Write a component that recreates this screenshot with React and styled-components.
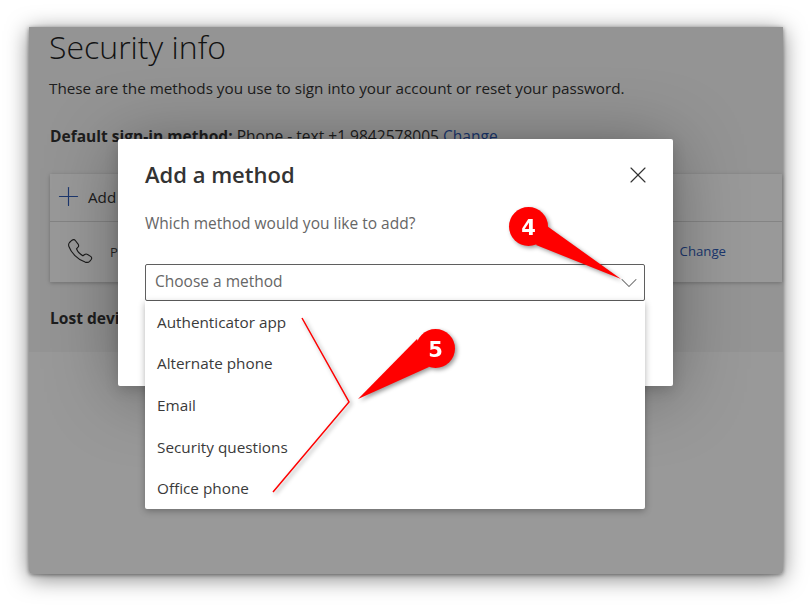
import React from "react";
import styled, { createGlobalStyle } from "styled-components";
import { X, Plus, ChevronDown } from "lucide-react";

const Global = createGlobalStyle`
  html, body { margin: 0; padding: 0; background: #fff; }
  body { font-family: "Open Sans", "Noto Sans", "Liberation Sans", sans-serif; }
  * { box-sizing: border-box; }
`;

const Stage = styled.div`
  position: relative;
  width: 812px;
  height: 606px;
  padding: 27px 29px 32px 29px;
  overflow: hidden;
  background: #fff;
`;

const Frame = styled.div`
  position: relative;
  width: 754px;
  height: 547px;
  background: #fff;
  border-radius: 0 0 4px 4px;
  box-shadow: 0 4px 22px rgba(0, 0, 0, 0.5), 0 1px 4px rgba(0, 0, 0, 0.45);
`;

const Page = styled.section`
  height: 325px;
  padding: 0 1px 0 20px;
  background: #f7f7f7;
`;

const Heading = styled.h1`
  margin: 0;
  height: 43px;
  font-size: 32px;
  line-height: 40px;
  font-weight: 300;
  white-space: nowrap;
  color: #1f1f1f;
`;

const Lead = styled.p`
  margin: 8px 0 0;
  font-size: 15.25px;
  line-height: 20px;
  color: #333;
  white-space: nowrap;
`;

const DefaultLine = styled.p`
  margin: 28px 0 0 1px;
  font-size: 15.55px;
  line-height: 20px;
  color: #333;
  white-space: nowrap;
  strong { font-weight: 700; }
`;

const Link = styled.a`
  color: #2f5cb8;
`;

const Card = styled.div`
  margin: 28px 0 0 1px;
  background: #fff;
  box-shadow: 0 1px 4px rgba(0, 0, 0, 0.25);
`;

const AddRow = styled.div`
  height: 48px;
  display: flex;
  align-items: center;
  padding: 0 0 2px 3px;
  font-size: 15.2px;
  color: #333;
  border-bottom: 1px solid #dcdcdc;
`;

const AddIcon = styled.span`
  display: flex;
  margin-right: 4px;
  color: #2f5cb8;
`;

const MethodRow = styled.div`
  height: 60px;
  display: flex;
  align-items: center;
  padding-left: 18px;
  font-size: 13px;
  color: #444;
  svg { margin-bottom: 1px; }
`;

const RowLabel = styled.span`
  margin-left: 17px;
`;

const RowLink = styled.a`
  margin-left: auto;
  margin-right: 56px;
  margin-bottom: 2px;
  font-size: 13.2px;
  color: #2f5cb8;
`;

const LostDevice = styled.p`
  margin: 26px 0 0 1px;
  font-size: 15.55px;
  line-height: 20px;
  font-weight: 700;
  color: #333;
`;

const Overlay = styled.div`
  position: absolute;
  inset: 0;
  background: rgba(0, 0, 0, 0.4);
  border-radius: 0 0 4px 4px;
`;

const Dialog = styled.div`
  position: absolute;
  left: 89px;
  top: 112px;
  width: 555px;
  height: 247px;
  padding: 19px 28px 0 27px;
  background: #fff;
  border-radius: 2px;
  box-shadow: 0 6px 70px rgba(0, 0, 0, 0.34), 0 4px 14px rgba(0, 0, 0, 0.16);
`;

const DialogHeader = styled.div`
  display: flex;
  align-items: center;
  justify-content: space-between;
  height: 34px;
`;

const DialogTitle = styled.h2`
  margin: 0 0 2px;
  font-size: 22px;
  line-height: 32px;
  font-weight: 600;
  color: #333;
`;

const Close = styled.button`
  display: flex;
  padding: 0;
  margin-right: -7px;
  border: 0;
  background: none;
  color: #333;
`;

const Question = styled.p`
  margin: 21px 0 0;
  font-size: 15.5px;
  line-height: 20px;
  color: #666;
`;

const Select = styled.div`
  margin-top: 31px;
  height: 37px;
  display: flex;
  align-items: center;
  justify-content: space-between;
  padding: 0 1px 3px 9px;
  border: 1px solid #5f5f5f;
  border-radius: 2px;
  font-size: 15.5px;
  color: #666;
  svg { color: #666; margin-top: 3px; }
`;

const Menu = styled.ul`
  position: absolute;
  left: 27px;
  top: 162px;
  width: 500px;
  height: 208px;
  margin: 0;
  padding: 0;
  list-style: none;
  background: #fff;
  border-radius: 0 0 2px 2px;
  box-shadow: 0 2px 7px rgba(0, 0, 0, 0.3);
`;

const MenuItem = styled.li`
  height: 41.6px;
  display: flex;
  align-items: center;
  padding-left: 12px;
  font-size: 15.3px;
  color: #3a3a3a;
`;

const Annotations = styled.svg`
  position: absolute;
  left: 0;
  top: 0;
  width: 812px;
  height: 606px;
  pointer-events: none;
  filter: drop-shadow(2px 2px 2px rgba(0, 0, 0, 0.4));
`;

const Badge = styled.text`
  font-family: "DejaVu Sans", sans-serif;
  font-size: 21px;
  font-weight: 700;
  fill: #fff;
  text-anchor: middle;
`;

const PhoneIcon = () => (
  <svg width="25" height="25" viewBox="0 0 25 25" fill="none" stroke="#2b2b2b" strokeWidth="1.1">
    <path d="M1.500 3.500 4 1.200C5.200.3 6.500.400 7.300 1.500l2.800 3.700c.8 1.100.7 2.100-.1 3L8.500 9.800c1 2.700 3.600 5.500 6.400 7l1.800-1.300c1-.7 1.900-.6 2.900 0l3 1.900c1.200.8 1.400 2 .6 3.100l-1.500 1.800c-1 1.100-2.600 1.400-4.600.8C9.500 20.500 3 13.500.9 7.500.4 6 .6 4.500 1.500 3.500Z" />
  </svg>
);

export default function App() {
  return (
    <Stage>
      <Global />
      <Frame>
        <Page>
          <Heading>Security info</Heading>
          <Lead>These are the methods you use to sign into your account or reset your password.</Lead>
          <DefaultLine>
            <strong>Default sign-in method:</strong> Phone - text +1 9842578005 <Link>Change</Link>
          </DefaultLine>
          <Card>
            <AddRow>
              <AddIcon><Plus size={31} strokeWidth={0.9} /></AddIcon>
              Add method
            </AddRow>
            <MethodRow>
              <PhoneIcon />
              <RowLabel>Phone</RowLabel>
              <RowLink>Change</RowLink>
            </MethodRow>
          </Card>
          <LostDevice>Lost device? Sign out everywhere</LostDevice>
        </Page>
        <Overlay />
        <Dialog>
          <DialogHeader>
            <DialogTitle>Add a method</DialogTitle>
            <Close><X size={28} strokeWidth={1} /></Close>
          </DialogHeader>
          <Question>Which method would you like to add?</Question>
          <Select>
            Choose a method
            <ChevronDown size={28} strokeWidth={0.9} />
          </Select>
          <Menu>
            <MenuItem>Authenticator app</MenuItem>
            <MenuItem>Alternate phone</MenuItem>
            <MenuItem>Email</MenuItem>
            <MenuItem>Security questions</MenuItem>
            <MenuItem>Office phone</MenuItem>
          </Menu>
        </Dialog>
      </Frame>
      <Annotations viewBox="0 0 812 606">
        <circle cx="528.500" cy="226.500" r="19.500" fill="#f00" />
        <polygon points="547,226 621,279 536,245" fill="#f00" />
        <Badge x="528.500" y="234.500">4</Badge>
        <circle cx="435.500" cy="348.500" r="19.500" fill="#f00" />
        <polygon points="417,339 358,399 429,367" fill="#f00" />
        <Badge x="435.500" y="356.500">5</Badge>
        <polyline points="302,318 349,402 273,492" fill="none" stroke="#f00" strokeWidth="1.500" />
      </Annotations>
    </Stage>
  );
}
